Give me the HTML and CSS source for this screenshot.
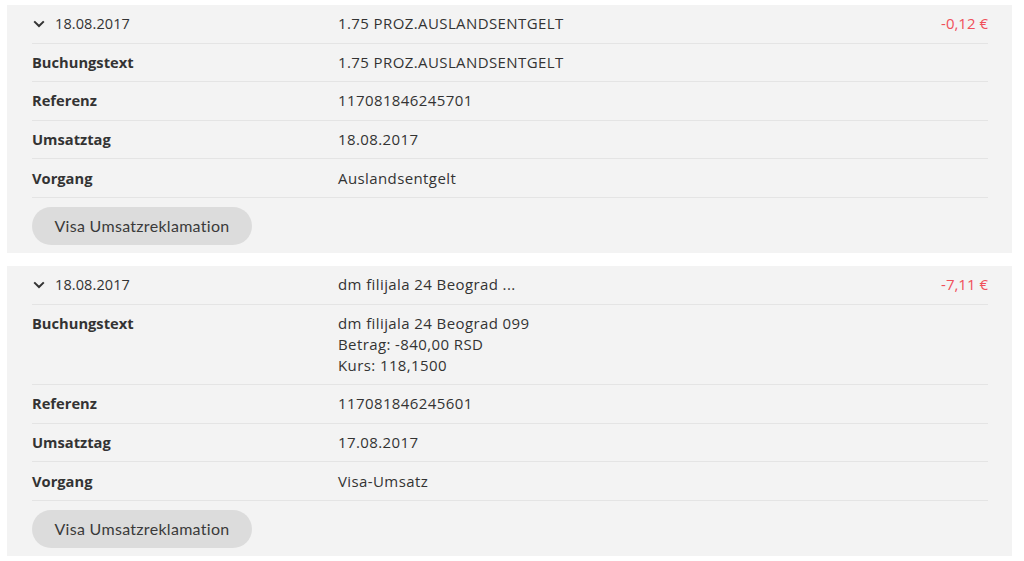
FILE: index.html
```html
<!DOCTYPE html>
<html lang="de">
<head>
<meta charset="utf-8">
<link rel="stylesheet" href="styles.css">
</head>
<body>
<div class="list">
  <section class="card">
    <div class="row head">
      <div class="label date"><svg class="chev" viewBox="0 0 12 8" width="12" height="8"><path d="M1.2 1.4 L6 6 L10.8 1.4" fill="none" stroke="#333" stroke-width="2"/></svg>18.08.2017</div>
      <div class="value">1.75 PROZ.AUSLANDSENTGELT</div>
      <div class="amount">-0,12 €</div>
    </div>
    <div class="row"><div class="label">Buchungstext</div><div class="value">1.75 PROZ.AUSLANDSENTGELT</div></div>
    <div class="row"><div class="label">Referenz</div><div class="value">117081846245701</div></div>
    <div class="row"><div class="label">Umsatztag</div><div class="value">18.08.2017</div></div>
    <div class="row"><div class="label">Vorgang</div><div class="value">Auslandsentgelt</div></div>
    <div class="actions"><button class="btn">Visa Umsatzreklamation</button></div>
  </section>
  <section class="card">
    <div class="row head">
      <div class="label date"><svg class="chev" viewBox="0 0 12 8" width="12" height="8"><path d="M1.2 1.4 L6 6 L10.8 1.4" fill="none" stroke="#333" stroke-width="2"/></svg>18.08.2017</div>
      <div class="value">dm filijala 24 Beograd ...</div>
      <div class="amount">-7,11 €</div>
    </div>
    <div class="row"><div class="label">Buchungstext</div><div class="value">dm filijala 24 Beograd 099<br>Betrag: -840,00 RSD<br>Kurs: 118,1500</div></div>
    <div class="row"><div class="label">Referenz</div><div class="value">117081846245601</div></div>
    <div class="row"><div class="label">Umsatztag</div><div class="value">17.08.2017</div></div>
    <div class="row"><div class="label">Vorgang</div><div class="value">Visa-Umsatz</div></div>
    <div class="actions"><button class="btn">Visa Umsatzreklamation</button></div>
  </section>
</div>
</body>
</html>
```
FILE: styles.css
```css
html, body {
  margin: 0;
  padding: 0;
  background: #fff;
}
body {
  font-family: "Open Sans", "Liberation Sans", sans-serif;
  font-size: 14px;
  color: #333;
}
.list {
  display: flex;
  flex-direction: column;
  gap: 13px;
  padding: 5px 12px 0 7px;
}
.card {
  background: #f3f3f3;
  padding: 0 24px 8px 25px;
}
.row {
  display: flex;
  align-items: flex-start;
  line-height: 21px;
  padding: 8.3px 0;
  border-bottom: 1px solid #e4e4e4;
}
.label {
  width: 306px;
  flex: none;
  font-weight: 700;
  font-size: 14.7px;
}
.date {
  font-weight: 400;
  font-size: 14.5px;
  letter-spacing: 0.1px;
  display: flex;
  align-items: center;
}
.chev {
  margin: 0 10px 0 1px;
}
.value {
  flex: 1;
  font-size: 15px;
  letter-spacing: 0.4px;
}
.amount {
  color: #f0505a;
  text-align: right;
  font-size: 15px;
}
.actions {
  padding-top: 9px;
}
.btn {
  font-family: "Lato", "Open Sans", sans-serif;
  font-size: 16px;
  color: #3a3a3a;
  background: #dcdcdc;
  border: none;
  border-radius: 19px;
  height: 38px;
  width: 220px;
  padding: 0;
  letter-spacing: 0.3px;
}
```
